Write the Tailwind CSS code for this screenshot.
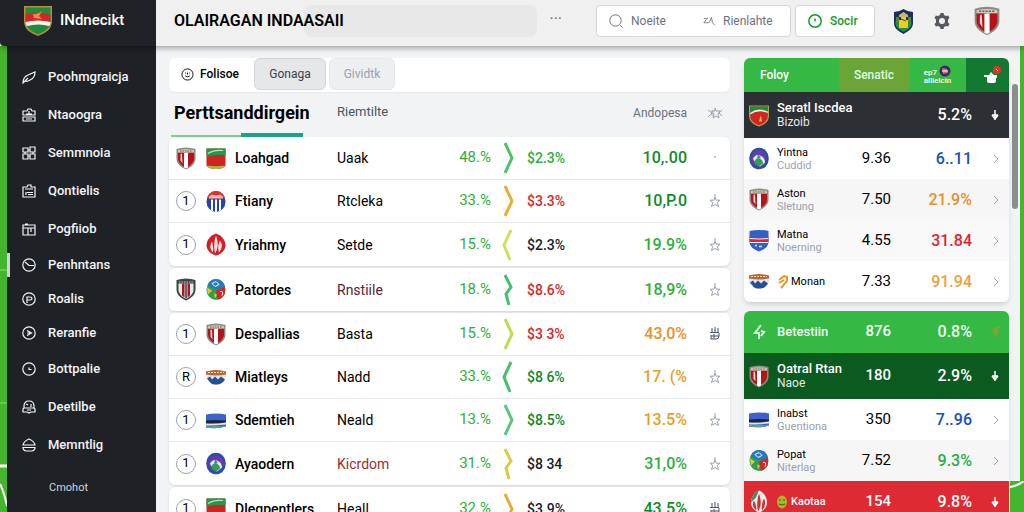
<!DOCTYPE html>
<html lang="id">
<head>
  <meta charset="UTF-8" />
  <meta name="viewport" content="width=device-width, initial-scale=1.0" />
  <title>Olairagan Indaasaii</title>
  <script src="https://cdn.jsdelivr.net/npm/@tailwindcss/browser@4"></script>
</head>
<body class="h-screen overflow-hidden bg-[#45b52d] font-[Roboto,'Liberation_Sans',sans-serif] text-sm text-black">

  <!-- club crests and icons -->
  <svg class="absolute size-0" xmlns="http://www.w3.org/2000/svg">
    <defs>
      <clipPath id="clipRound"><ellipse cx="10" cy="11" rx="9.500" ry="10.500" /></clipPath>
      <clipPath id="clipOval"><path d="M0 5q10-3 20 0v6q-3 7-10 7.500Q3 18 0 11z" /></clipPath>
    </defs>
    <symbol id="stripes" viewBox="0 0 20 22">
      <path d="M.5 1.500q9.500-3 19 0V11c0 5-4 8.500-9.500 11C4.500 19.500.5 16 .5 11z" fill="#8d8a80" />
      <path d="M2 5h16v6c0 4-3.500 7-8 9.500C5.500 18 2 15 2 11z" fill="#b3141c" />
      <path d="M8 5.500l4-.5v15l-2 1-2-1z" fill="#fff" /><path d="M4.500 6.500l1.500-.5.500 10-2-3z" fill="#f0d6d6" />
      <path d="M2 2.800q8-2 16 0v2.200H2z" fill="#cfc8b8" /><path d="M4 3.500h12" stroke="#6b5a50" stroke-dasharray="1.500 1" />
    </symbol>
    <symbol id="stripesDark" viewBox="0 0 20 22">
      <path d="M.5 1.500q9.500-3 19 0V11c0 5-4 8.500-9.500 11C4.500 19.500.5 16 .5 11z" fill="#3d4742" />
      <path d="M2.500 5h15v6c0 4-3 7-7.500 9.500C5.500 18 2.500 15 2.500 11z" fill="#e9e9e6" />
      <path d="M6 5h2.500v14L6 17zM11.500 5H14v12l-2.500 2z" fill="#a5172a" /><path d="M9.300 5h1.400v15H9.300z" fill="#333" />
      <path d="M3 3.500h14" stroke="#c9cfc9" stroke-dasharray="1.500 1" />
    </symbol>
    <symbol id="banner" viewBox="0 0 20 22">
      <path d="M.5 1h19v17q-2 3.500-9.500 3.500T.5 18z" fill="#cf2420" />
      <path d="M.5 1h19v7q-9-2-19 1z" fill="#1d9a4c" /><path d="M2 6q6-4 15-3" stroke="#b7e4c4" fill="none" stroke-width="1.200" />
      <path d="M1 18q9 1.500 18 0-2 3.500-9 3.500T1 18z" fill="#9fbf45" />
    </symbol>
    <symbol id="national" viewBox="0 0 28 30">
      <path d="M0 0h28v15c0 8-6 12-14 15C6 27 0 23 0 15z" fill="#b98b3c" />
      <path d="M1.500 1.500h25V15c0 7-5.500 10.500-12.500 13.500C7 25.500 1.500 22 1.500 15z" fill="#1f8c3a" />
      <path d="M1.500 8q12-3 25 1v7q-12-3-25 1z" fill="#d5242a" /><path d="M1.500 16q12-3 25 0c0 2-.5 3-1.500 4q-10-3-22 0c-1-1-1.500-2-1.500-4z" fill="#f5f5f0" />
      <path d="M9 8q5 1 9-3l-3 5 3 3-8-1z" fill="#f08a4b" />
    </symbol>
    <symbol id="redGreen" viewBox="0 0 20 22">
      <path d="M0 1h20v10c0 6-4 9-10 11C4 20 0 17 0 11z" fill="#a9a05a" />
      <path d="M1.200 2h17.600v9c0 5-3.800 8-8.800 9.800C5 19 1.200 16 1.200 11z" fill="#d0261f" />
      <path d="M1.200 2h17.600v5q-8-3-17.600 2z" fill="#1a8d45" /><path d="M1.200 8.500q8-6 17.600-1.500v1.500q-9-4-17.600 1.500z" fill="#e9f3e6" />
      <path d="M11 13l1-2 1 6h-3z" fill="#e8b73a" />
    </symbol>
    <symbol id="ball" viewBox="0 0 20 22">
      <g clip-path="url(#clipRound)"><path d="M0 0h20v22H0z" fill="#1e46b4" /><path d="M0 0h20v8H0z" fill="#db3127" />
      <path d="M5 9h2v12H5zM9 9h2v13H9zM13 9h2v12h-2z" fill="#fff" /><path d="M3 6l3-2 4 1 4-1 3 2v2H3z" fill="#f2b6a8" /></g>
    </symbol>
    <symbol id="flame" viewBox="0 0 20 22">
      <path d="M10 0c6 2 9.500 7 9.500 12 0 5-5 9-9.500 10C5.500 21 .5 17 .5 12 .5 7 4 2 10 0z" fill="#cf2028" />
      <path d="M10 2q-3 8-1 18 5-7 1-18zM6 8q-4 6 1 11 1-5-1-11zM14 7q4 6-1 12-2-6 1-12z" fill="#f8dcdc" />
    </symbol>
    <symbol id="flameLight" viewBox="0 0 20 22">
      <path d="M10 0c5 2 8 7 8 12 0 5-4 9-8 10-4-1-8-5-8-10C2 7 5 2 10 0z" fill="#eceeeb" />
      <path d="M10 0C5 2 2 7 2 12l5-5z" fill="#3e8f63" />
      <path d="M10 3q-3 8-1 18 5-7 1-18zM5 10q-3 5 2 10 1-5-2-10zM15 8q3 6-2 12-1-6 2-12z" fill="#d22d33" />
    </symbol>
    <symbol id="mosaic" viewBox="0 0 20 22">
      <g clip-path="url(#clipRound)"><path d="M0 0h20v22H0z" fill="#2f9e4f" /><path d="M3 0h14l2 8-9 3-8-4z" fill="#2379c4" />
      <path d="M10 12l9-4v10l-7 4z" fill="#d3262b" /><path d="M1 9l5 3-4 4zM8 15l3 1-2 4z" fill="#e7c63c" /><path d="M6 5l4-2 3 3-4 2zM14 13q4-1 2 4" stroke="#fff" fill="none" /></g>
    </symbol>
    <symbol id="waves" viewBox="0 0 20 22">
      <g clip-path="url(#clipOval)"><path d="M0 0h20v22H0z" fill="#dfe6ee" /><path d="M0 3h20v5q-10 2-20 0z" fill="#b9672c" />
      <path d="M2 6h16" stroke="#f0d9ae" stroke-dasharray="2 1" /><path d="M1 12l3-2 2 3 3-3 3 3 3-3 4 3v2l-4 3H6z" fill="#24509b" /><path d="M3 17q7 2 14 0l-4 3H7z" fill="#a7885c" /></g>
    </symbol>
    <symbol id="flag" viewBox="0 0 20 22">
      <path d="M0 5q10-2 20 0v12q-10 3-20 1z" fill="#3c63cc" /><path d="M0 11q10-1 20 0v2q-10 1-20 1z" fill="#25233b" />
      <path d="M0 14q10 1 20-1v2q-10 1-20 1z" fill="#e3e6e8" /><path d="M0 16l4 1 5-1 6 1 5-1v1q-10 3-20 1z" fill="#58a87c" />
    </symbol>
    <symbol id="globe" viewBox="0 0 20 22">
      <ellipse cx="10" cy="11" rx="9.800" ry="10.800" fill="#2b4da8" /><ellipse cx="10" cy="11" rx="7.500" ry="8.500" fill="#6b3ca6" />
      <path d="M4 11q3-5 7-3 5 2 5 7l-5 4q-5-2-7-8z" fill="#dcefe3" /><path d="M5 14q3-5 6-3t3 5l-4 3q-3-1-5-5z" fill="#2f9e58" /><path d="M9 7l3 3-4 1z" fill="#2f83c9" />
    </symbol>
    <symbol id="blueShield" viewBox="0 0 20 22">
      <path d="M.5 1.500q9.500-2 19 0V12c0 5-4 8-9.500 10C4.500 20 .5 17 .5 12z" fill="#2f62c2" />
      <path d="M.5 7q9.500 2 19 0v5H.5z" fill="#d52a35" /><path d="M.5 9q9.500 1 19 0M1 13h18" stroke="#e8ecf5" fill="none" /><path d="M6 16h2M10 17h3" stroke="#dce6f7" stroke-width="1.500" />
    </symbol>
    <symbol id="lantern" viewBox="0 0 21 25">
      <path d="M1 3q5 0 9.500-3Q15 3 20 3v11c0 5-4 8-9.500 11C5 22 1 19 1 14z" fill="#1b2f57" />
      <path d="M2.500 12h16v2c0 4-3 6-8 9-5-3-8-5-8-9z" fill="#1f9140" /><path d="M6 6l4.500-3L15 6v2H6z" fill="#c9b878" /><path d="M8 8h5v3h2v8H6v-8h2z" fill="#f1ca20" /><path d="M3 8h3v4H3zM15 8h3v4h-3z" fill="#4f8a3a" /><path d="M8 10l5 2" stroke="#53451a" />
    </symbol>

    <symbol id="star" viewBox="0 0 14 14"><path d="M7 0v4M7 3.500l1.200 2.700H12L9.300 8.500l1.200 4L7 10.500l-3.500 2 1.200-4L2 6.200h3.800z" /></symbol>
    <symbol id="plug" viewBox="0 0 14 14"><path d="M4 1v4M7 0v5M10 1v4M2 5.500h9M3 8v4h5q3 0 3-3V6M3 9h8M6 7v5" /></symbol>
    <symbol id="dot" viewBox="0 0 14 14"><circle cx="7" cy="6" r=".5" /></symbol>
    <symbol id="right" viewBox="0 0 14 34"><path d="M3 2l7 15-7 15" /></symbol>
    <symbol id="left" viewBox="0 0 14 34"><path d="M9 2L2 17l6 15" /></symbol>
    <symbol id="zig" viewBox="0 0 14 34"><path d="M3 2l6 12-5 7 3 11" /></symbol>
    <symbol id="caret" viewBox="0 0 14 14"><path d="M6 3l4 4-4 4" /></symbol>
    <symbol id="arrow" viewBox="0 0 14 14"><path d="M7 2v10M4 7l3 4 3-4M4 7h6" /></symbol>
    <symbol id="tick" viewBox="0 0 14 14"><path d="M11 2L5 5l4 3-3 4M5 9l5-4" /></symbol>
    <symbol id="brush" viewBox="0 0 14 14"><path d="M1 13q0-6 5-8l7-3q0 6-5 8-3 2-5 1zM1 13l5-5" /></symbol>
    <symbol id="case" viewBox="0 0 14 14"><path d="M1 3h4l1-2h3l1 2h3v4H1zM1 9v4h12V9zM4 6h6M4 11h6M7 3v4" /></symbol>
    <symbol id="grid" viewBox="0 0 14 14"><path d="M1 2h5v4H1zM8 1h5v5H8zM1 8h5v5H1zM8 8h5v5H8zM3 6v2M11 6v2M6 4h2M6 10h2" /></symbol>
    <symbol id="folder" viewBox="0 0 14 14"><path d="M1 3h4l1-2h3v2h4v10H1zM3 5h8M4 8v3M5 8.500h6M6 10.500h5" /></symbol>
    <symbol id="box" viewBox="0 0 14 14"><path d="M1 3h12v10H1zM1 6h12M6 6v7M9 6v4M3 2h3" /></symbol>
    <symbol id="clock" viewBox="0 0 14 14"><circle cx="7" cy="7" r="6.200" /><path d="M3 4l4 3.500h5" /></symbol>
    <symbol id="pin" viewBox="0 0 14 14"><circle cx="7" cy="7" r="6.200" /><path d="M5 11V5h3q2 0 2 1.500T8 8H5" /></symbol>
    <symbol id="play" viewBox="0 0 14 14"><circle cx="7" cy="7" r="6.200" /><path d="M5 4.500l4.500 2.500L5 9.500M5 7h3" /></symbol>
    <symbol id="time" viewBox="0 0 14 14"><circle cx="7" cy="7" r="6.200" /><path d="M7 5.500v2h2.500" /></symbol>
    <symbol id="robot" viewBox="0 0 14 14"><path d="M2 6q0-5 5-5t5 5v2l1 1v3H9l-2 1-2-1H1V9l1-1zM4 4l2 1M9 4v3M2 8h10M5 10h4" /></symbol>
    <symbol id="tray" viewBox="0 0 14 14"><path d="M1 7q1-4 6-6 5 2 6 6zM1 9.500h12v1q-1 2.500-3 2.500H4q-2 0-3-2.500z" /></symbol>
    <symbol id="face" viewBox="0 0 14 14"><circle cx="7" cy="7" r="6" /><path d="M4.500 5.500h1M8.500 5.500h1M4.500 8.500q2.500 2 5 0M7 5v2" /></symbol>
    <symbol id="find" viewBox="0 0 14 14"><circle cx="6.500" cy="6.500" r="5.700" /><path d="M11 11l2.500 2.500" /></symbol>
    <symbol id="link" viewBox="0 0 14 14"><path d="M1 4h5M4 5L1 9h6l3-6 1 6 3 3" /></symbol>
  </svg>

  <div class="flex h-full flex-col">
    <header class="relative z-10 flex h-[46px] shrink-0 bg-[#f0f0f1] shadow-[0_2px_6px_rgba(0,0,0,0.35)]">
      <div class="flex w-[156px] shrink-0 items-center gap-2 rounded-bl bg-[#1f2327] pb-1 pl-6 text-white">
        <svg class="h-[30px] w-7"><use href="#national" /></svg>
        <span class="text-[15px] font-medium">INdnecikt</span>
      </div>
      <div class="flex min-w-0 flex-1 items-center pr-6 pb-1 pl-[18px]">
        <h1 class="z-10 text-base font-semibold whitespace-nowrap">OLAIRAGAN INDAASAII</h1>
        <input aria-label="Cari" class="-ml-10 h-8 w-[150px] flex-1 rounded-lg bg-[#e8e8e9]" />
        <button aria-label="Menu" class="ml-3 pb-1 text-base text-gray-500">···</button>
        <div class="ml-[34px] flex h-8 w-[195px] items-center rounded border border-gray-300 bg-white pl-3 text-xs text-gray-500">
          <svg class="size-[14px] fill-none stroke-current"><use href="#find" /></svg>
          <input aria-label="Noeite" placeholder="Noeite" class="ml-2 w-[72px] placeholder:text-gray-500" />
          <a href="#" class="flex items-center gap-2"><svg class="size-3 fill-none stroke-current"><use href="#link" /></svg>Rienlahte</a>
        </div>
        <button class="ml-1 flex h-8 w-20 items-center gap-2 rounded border border-gray-300 bg-white pl-3 text-xs font-medium text-[#169a2a]">
          <svg class="size-[14px] fill-none stroke-current stroke-[1.500]" viewBox="0 0 14 14"><circle cx="7" cy="7" r="6.200" /><path d="M7 4.500v3" /></svg>Socir
        </button>
        <svg class="ml-[18px] h-[25px] w-[21px]"><use href="#lantern" /></svg>
        <button aria-label="Setelan" class="ml-5">
          <svg class="size-4" viewBox="0 0 16 16"><path d="M6.500 0h3l.5 2 2 1 2.200-.5L15.500 5 14 6.500v3l1.500 1.500-1.300 2.500L12 13l-2 1-.5 2h-3L6 14l-2-1-2.200.5L.5 11 2 9.500v-3L.5 5l1.300-2.500L4 3l2-1z" fill="#55595d" /><circle cx="8" cy="8" r="3" fill="#f0f0f1" /></svg>
        </button>
        <svg class="ml-6 h-[30px] w-[26px]"><use href="#stripes" /></svg>
      </div>
    </header>

    <div class="flex min-h-0 flex-1">
      <svg class="h-full w-[7px] shrink-0" viewBox="0 0 7 466" preserveAspectRatio="xMinYMin slice">
        <path d="M0 224h7M0 357h7" stroke="#8fdc7a" /><path d="M0 420h7" stroke="#fff" stroke-width="3" /><path d="M0 438q4 8 7 22" stroke="#fff" stroke-width="2" fill="none" />
      </svg>

      <nav class="w-[149px] shrink-0 bg-[#1e2227] pt-3 text-[13px] font-medium text-gray-100">
        <ul id="menu"></ul>
        <a href="#" class="mt-4 block pl-[42px] text-[11px] font-normal text-gray-300">Cmohot</a>
      </nav>

      <main class="flex min-w-0 flex-1 gap-[14px] bg-[#f1f3f4] pt-3 pl-[13px]">
        <section class="min-w-0 flex-1">
          <div class="flex h-[34px] items-start gap-[3px] rounded-md bg-white text-xs shadow-xs">
            <button class="flex h-8 w-[82px] items-center justify-center gap-1.5 font-medium">
              <svg class="size-[13px] fill-none stroke-current"><use href="#face" /></svg>Folisoe
            </button>
            <button class="h-8 w-[72px] rounded-md border border-gray-300 bg-[#e6e7e8] text-gray-700">Gonaga</button>
            <button class="h-8 w-[66px] rounded-md border border-gray-200 bg-[#eeeff0] text-gray-400">Gividtk</button>
          </div>

          <table class="block w-full">
            <thead class="block">
              <tr class="grid h-[45px] grid-cols-[5px_163fr_193fr_100fr_57fr_43px] items-center pb-1 text-left">
                <td></td>
                <th class="text-lg font-bold whitespace-nowrap">Perttsanddirgein</th>
                <th class="text-[13px] font-normal text-gray-600">Riemtilte</th>
                <td></td>
                <th class="flex justify-end text-xs font-normal text-gray-500">Andopesa</th>
                <th class="flex justify-center pl-3"><svg class="h-3 w-4 fill-none stroke-gray-400" viewBox="0 0 16 12"><path d="M1 3l4 3-4 4M5 3v6M8 1l1 3h4l-2 3 1 4-3-2-3 2 1-4-2-3h3zM15 3l-3 3 3 3" /></svg></th>
              </tr>
            </thead>
          </table>
          <div class="-mt-1 flex h-1 items-end pl-0.5"><span class="h-0.5 w-[70px] bg-[#7fce86]"></span><span class="h-1 w-[62px] bg-[#1aa38c]"></span></div>
          <table id="teams" class="block w-full" aria-label="Perttsanddirgein"></table>
        </section>

        <div class="flex w-[276px] shrink-0 gap-[3px]">
          <aside class="w-[265px] shrink-0">
            <div class="overflow-hidden rounded-md bg-white shadow-md">
              <div class="flex h-[34px] text-xs font-medium text-white">
                <button class="w-[95px] bg-[#36b944] pl-4 text-left">Foloy</button>
                <button class="w-[70px] bg-[#6ba536] text-green-100">Senatic</button>
                <button aria-label="Klub" class="flex flex-1 flex-col items-center justify-center bg-[#36b944] text-[8px] leading-[8px]">
                  <span class="flex items-end gap-0.5">ep7<svg class="size-3" viewBox="0 0 12 12"><circle cx="6" cy="6" r="5.500" fill="#3e2b59" /><path d="M3 3l5 1 1 4-5 1z" fill="#c96b8b" /><path d="M3 6h6" stroke="#fff" /></svg></span>
                  <span>allielcin</span>
                </button>
                <button aria-label="Keranjang" class="flex w-[43px] items-center justify-center bg-[#127a30] pl-2">
                  <svg class="h-[18px] w-[18px]" viewBox="0 0 18 18"><path d="M1 9h5l2-3 3 3h3v3h-1v3q0 2-2 2H6q-2 0-2-2v-4H1z" fill="#fff" /><circle cx="14" cy="4" r="4" fill="#e5322c" /><path d="M13 3l2 2" stroke="#fff" /></svg>
                </button>
              </div>
              <table id="rankA" class="block w-full" aria-label="Foloy"></table>
            </div>
            <div class="mt-[9px] overflow-hidden rounded-md bg-white shadow-md">
              <table id="rankB" class="block w-full" aria-label="Betestiin"></table>
            </div>
          </aside>
          <div class="mt-[26px] h-[125px] w-1.5 rounded-full bg-[#8b8d8f]"></div>
        </div>
      </main>
      <div class="w-1 shrink-0"></div>
    </div>
  </div>

  <svg class="absolute right-0 bottom-0 h-[31px] w-[14px]" viewBox="0 0 14 31"><path d="M0 0h14v31H0z" fill="#45b52d" /><path d="M0 6q7-1 14-6" stroke="#fff" stroke-width="2" fill="none" /></svg>

  <script>
    const menu = [
      ["brush", "Poohmgraicja"], ["case", "Ntaoogra"], ["grid", "Semmnoia"], ["folder", "Qontielis"], ["box", "Pogfiiob"],
      ["clock", "Penhntans"], ["pin", "Roalis"], ["play", "Reranfie"],
      ["time", "Bottpalie"], ["robot", "Deetilbe"], ["tray", "Memntlig"],
    ];

    // the rows round the active entry are a little tighter
    document.getElementById("menu").innerHTML = menu.map(([icon, label], i) => `
      <li class="flex items-center ${i > 4 && i < 8 ? "h-[34px]" : "h-[38px]"}">
        <span class="h-6 w-[3px] ${i === 5 ? "bg-[#c9d6df]" : ""}"></span>
        <a href="#" class="flex items-center gap-3 pl-3"><svg class="size-[14px] fill-none stroke-current stroke-[1.200]"><use href="#${icon}" /></svg>${label}</a>
      </li>`).join("");

    const green = "text-[#2fae3b]", deep = "text-[#0f8a2a]", red = "text-[#d42a2a]", ink = "text-[#1c1c2a]", amber = "text-[#e5a02c]";
    // badge, crest, name, league, leagueColor, pct, chevron, chevronColor, price, priceColor, total, totalColor, mark
    const groups = [
      [
        ["stripes", "banner", "Loahgad", "Uaak", "", "48.%", "right", "stroke-[#52c069]", "$2.3%", green, "10,.00", deep, "dot"],
        ["1", "ball", "Ftiany", "Rtcleka", "", "33.%", "right", "stroke-[#e5ae3c]", "$3.3%", red, "10,P.0", deep, "star"],
        ["1", "flame", "Yriahmy", "Setde", "", "15.%", "left", "stroke-[#d3df5c]", "$2.3%", ink, "19.9%", green, "star"],
      ],
      [
        ["stripesDark", "mosaic", "Patordes", "Rnstiile", "text-[#5b2430]", "18.%", "zig", "stroke-[#48bd6c]", "$8.6%", red, "18,9%", green, "star"],
      ],
      [
        ["1", "stripes", "Despallias", "Basta", "", "15.%", "right", "stroke-[#bcdc58]", "$3 3%", red, "43,0%", "text-[#e8912a]", "plug"],
        ["R", "waves", "Miatleys", "Nadd", "", "33.%", "left", "stroke-[#48bd6c]", "$8 6%", deep, "17. (%", amber, "star"],
        ["1", "flag", "Sdemtieh", "Neald", "", "13.%", "right", "stroke-[#5cc67a]", "$8.5%", deep, "13.5%", amber, "star"],
        ["1", "globe", "Ayaodern", "Kicrdom", "text-[#9c2b2f]", "31.%", "zig", "stroke-[#d8cc44]", "$8 34", ink, "31,0%", green, "star"],
      ],
      [
        ["1", "banner", "Dlegpentlers", "Heall", "", "32.%", "right", "stroke-[#e5ae3c]", "$3.9%", ink, "43.5%", deep, "plug"],
      ],
    ];

    function badge(b) {
      return b.length > 1
        ? `<svg class="h-[23px] w-5"><use href="#${b}" /></svg>`
        : `<span class="flex size-5 items-center justify-center rounded-full border border-gray-400 text-[13px]">${b}</span>`;
    }

    document.getElementById("teams").innerHTML = groups.map(rows => `
      <tbody class="mb-0.5 block divide-y divide-gray-200 rounded-md bg-white shadow-sm">${rows.map(r => `
        <tr class="grid h-[43px] grid-cols-[20px_39px_102fr_96fr_58fr_36px_103fr_57fr_43px] items-center pl-[7px] whitespace-nowrap">
          <td>${badge(r[0])}</td>
          <td class="flex justify-center"><svg class="h-[23px] w-5"><use href="#${r[1]}" /></svg></td>
          <td class="font-medium">${r[2]}</td>
          <td class="${r[4]}">${r[3]}</td>
          <td class="text-right text-[15px] ${green}">${r[5]}</td>
          <td class="flex justify-center"><svg class="h-[34px] w-[14px] fill-none stroke-3 ${r[7]}"><use href="#${r[6]}" /></svg></td>
          <td class="font-medium ${r[9]}">${r[8]}</td>
          <td class="text-right text-base leading-5 font-medium ${r[11]}">${r[10]}</td>
          <td class="flex justify-center pl-3"><svg class="size-[14px] fill-none ${r[12] === "plug" ? "stroke-gray-600" : "stroke-gray-400"}"><use href="#${r[12]}" /></svg></td>
        </tr>`).join("")}
      </tbody>`).join("");

    const slip = `<svg class="size-[14px] shrink-0" viewBox="0 0 14 14"><path d="M2 5l5-4 3 1v4l-6 7M2 8l5-3" fill="none" stroke="#ee9526" stroke-width="2" /></svg>`;
    const coin = `<svg class="size-[14px] shrink-0" viewBox="0 0 14 14"><ellipse cx="5" cy="7" rx="5" ry="6.500" fill="#a9b52e" /><path d="M2 5h2M6 5h2M2 9q3 2 6 0" stroke="#4d5a12" fill="none" /></svg>`;
    // crest, name, sub, odds, pct, pctColor, row style, extra icon
    const rankA = [
      ["redGreen", "Seratl Iscdea", "Bizoib", "", "5.2%", "", "head h-[46px] bg-[#2c2f33] text-white"],
      ["globe", "Yintna", "Cuddid", "9.36", "6..11", "text-[#1550c0]", "h-[41px]"],
      ["stripes", "Aston", "Sletung", "7.50", "21.9%", "text-[#e88f2c]", "h-[41px] bg-[#f6f6f7]"],
      ["blueShield", "Matna", "Noerning", "4.55", "31.84", "text-[#dc2430]", "h-[41px] bg-[#f9f9fa]"],
      ["waves", "Monan", "", "7.33", "91.94", "text-[#eba136]", "h-[41px]", slip],
    ];
    const rankB = [
      ["", "Betestiin", "", "876", "0.8%", "", "head h-[42px] bg-[#36b944] text-green-50"],
      ["stripes", "Oatral Rtan", "Naoe", "180", "2.9%", "", "head h-[46px] bg-[#0b5a20] text-white"],
      ["flag", "Inabst", "Guentiona", "350", "7..96", "text-[#1550c0]", "h-[41px]"],
      ["mosaic", "Popat", "Niterlag", "7.52", "9.3%", "text-[#27ae46]", "h-[41px] bg-[#f6f6f7]"],
      ["flameLight", "Kaotaa", "", "154", "9.8%", "", "head h-[41px] bg-[#de2a33] text-white", coin],
    ];

    function rank(id, rows) {
      document.getElementById(id).innerHTML = `<tbody class="block">${rows.map(r => {
        const head = r[6].startsWith("head");
        return `
        <tr class="grid grid-cols-[28px_74fr_40fr_81fr_37px] items-center pl-[5px] whitespace-nowrap ${r[6]}">
          <td>${r[0] ? `<svg class="h-[23px] w-5"><use href="#${r[0]}" /></svg>` : `<svg class="ml-[3px] size-4 fill-none stroke-green-100 stroke-2" viewBox="0 0 16 16"><path d="M9 1L3 9h4v6M9 7l3 1-3 4" /></svg>`}</td>
          <td class="${head ? "text-[13px] leading-[14px] font-medium" : "text-[11px] leading-[13px]"}">
            <div class="flex items-center">${r[7] || ""}<span class="${r[7] ? "text-[11px]" : ""}">${r[1]}</span></div>
            ${r[2] ? `<div class="font-normal ${head ? "text-xs leading-[14px] text-gray-200" : "text-gray-400"}">${r[2]}</div>` : ""}
          </td>
          <td class="text-right text-[15px] ${head ? "font-medium" : ""}">${r[3]}</td>
          <td class="text-right text-base leading-5 font-medium ${r[5]}">${r[4]}</td>
          <td class="flex justify-center pl-2"><svg class="size-[14px] fill-none ${r[0] ? (head ? "stroke-white stroke-[1.500]" : "stroke-gray-400") : "stroke-[#7aa832] stroke-2"}"><use href="#${r[0] ? (head ? "arrow" : "caret") : "tick"}" /></svg></td>
        </tr>`;
      }).join("")}</tbody>`;
    }
    rank("rankA", rankA);
    rank("rankB", rankB);
  </script>
</body>
</html>
